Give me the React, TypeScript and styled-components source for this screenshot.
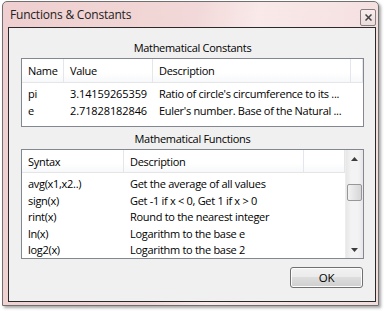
import React from "react";
import styled, { createGlobalStyle } from "styled-components";

const Global = createGlobalStyle`
  html, body { margin: 0; padding: 0; background: #ffffff; }
  body { font-family: "Open Sans", "Noto Sans", sans-serif; }
`;

const Page = styled.div`
  width: 384px;
  height: 311px;
  padding: 1px 0 0 2px;
  box-sizing: border-box;
`;

const Window = styled.div`
  width: 377px;
  height: 305px;
  box-sizing: border-box;
  border: 1px solid #707070;
  border-radius: 5px 5px 0 0;
  background: linear-gradient(100deg, #efcfcf 0%, #f2d8d8 45%, #f9e9e9 60%, #f3dcdc 100%);
  box-shadow: 2px 2px 3px rgba(0, 0, 0, 0.35);
  display: flex;
  flex-direction: column;
`;

const TitleBar = styled.div`
  height: 25px;
  display: flex;
  align-items: center;
  justify-content: space-between;
  padding: 0 2px 0 7px;
`;

const Title = styled.span`
  font-size: 12px;
  color: #222;
  letter-spacing: -0.2px;
`;

const CloseButton = styled.div`
  width: 14px;
  height: 15px;
  border: 1px solid #8a7f80;
  border-radius: 2px;
  background: linear-gradient(#f8eded, #ecdcdc);
  display: flex;
  align-items: center;
  justify-content: center;
  margin-top: 5px;
`;

const Client = styled.div`
  flex: 1;
  margin: 0 2px 3px 5px;
  border: 1px solid #2a2a2a;
  background: #f0f0f0;
  padding: 0 11px 0 12px;
  display: flex;
  flex-direction: column;
  font-size: 11px;
  letter-spacing: -0.3px;
  color: #000;
`;

const GroupLabel = styled.div<{ $top: number; $bottom: number }>`
  text-align: center;
  line-height: 15px;
  padding-top: ${(p) => p.$top}px;
  padding-bottom: ${(p) => p.$bottom}px;
`;

const ListView = styled.div<{ $h: number }>`
  height: ${(p) => p.$h}px;
  border: 1px solid #828790;
  background: #fff;
  box-sizing: border-box;
  display: flex;
  overflow: hidden;
`;

const ListBody = styled.div`
  flex: 1;
  min-width: 0;
  display: flex;
  flex-direction: column;
`;

const Header = styled.div<{ $cols: string }>`
  height: 23px;
  display: grid;
  grid-template-columns: ${(p) => p.$cols};
  border-bottom: 1px solid #e5e5e5;
  background: linear-gradient(#ffffff 0%, #ffffff 60%, #f7f8fa 100%);
  margin-bottom: 2px;
`;

const HeaderCell = styled.div`
  display: flex;
  align-items: center;
  padding-left: 6px;
  border-right: 1px solid #e3e6ea;
  white-space: nowrap;
  overflow: hidden;
`;

const Row = styled.div<{ $cols: string }>`
  height: 17px;
  display: grid;
  grid-template-columns: ${(p) => p.$cols};
  align-items: center;
`;

const Cell = styled.div<{ $mono?: boolean }>`
  padding-left: 6px;
  white-space: nowrap;
  overflow: hidden;
  letter-spacing: ${(p) => (p.$mono ? "-0.1px" : "inherit")};
`;

const ScrollBar = styled.div`
  width: 17px;
  display: flex;
  flex-direction: column;
  background: linear-gradient(90deg, #e7e7e7, #f3f3f3 30%, #f3f3f3 70%, #e7e7e7);
  border-left: 1px solid #ededed;
`;

const ScrollArrow = styled.div`
  height: 17px;
  display: flex;
  align-items: center;
  justify-content: center;
`;

const Track = styled.div`
  flex: 1;
  padding-top: 17px;
`;

const Thumb = styled.div`
  height: 15px;
  margin: 0 1px;
  border: 1px solid #979797;
  border-radius: 2px;
  background: linear-gradient(90deg, #f2f2f2, #e4e4e4 50%, #d6d6d6);
`;

const ButtonRow = styled.div`
  display: flex;
  justify-content: flex-end;
  padding-top: 8px;
  padding-right: 1px;
`;

const Button = styled.div`
  width: 73px;
  height: 21px;
  box-sizing: border-box;
  border: 1px solid #707070;
  border-radius: 3px;
  background: linear-gradient(#f2f2f2 0%, #ebebeb 45%, #dddddd 50%, #cfcfcf 100%);
  box-shadow: inset 0 0 0 1px #fcfcfc;
  display: flex;
  align-items: center;
  justify-content: center;
  font-size: 11.5px;
`;

const constCols = "42px 89px 198px 1fr";
const funcCols = "102px 180px 1fr";

const constants = [
  ["pi", "3.14159265359", "Ratio of circle's circumference to its ..."],
  ["e", "2.71828182846", "Euler's number. Base of the Natural ..."],
];

const functions = [
  ["avg(x1,x2..)", "Get the average of all values"],
  ["sign(x)", "Get -1 if x < 0, Get 1 if x > 0"],
  ["rint(x)", "Round to the nearest integer"],
  ["ln(x)", "Logarithm to the base e"],
  ["log2(x)", "Logarithm to the base 2"],
];

const Tri = ({ up }: { up?: boolean }) => (
  <svg width="7" height="4" viewBox="0 0 7 4">
    <path d={up ? "M0 4 L3.5 0 L7 4 Z" : "M0 0 L3.5 4 L7 0 Z"} fill="#3c3c3c" />
  </svg>
);

export default function App() {
  return (
    <Page>
      <Global />
      <Window>
        <TitleBar>
          <Title>Functions &amp; Constants</Title>
          <CloseButton>
            <svg width="7" height="7" viewBox="0 0 7 7">
              <path d="M0.5 0.5 L6.5 6.5 M6.5 0.5 L0.5 6.5" stroke="#444" strokeWidth="1.5" />
            </svg>
          </CloseButton>
        </TitleBar>
        <Client>
          <GroupLabel $top={12} $bottom={3}>Mathematical Constants</GroupLabel>
          <ListView $h={69}>
            <ListBody>
              <Header $cols={constCols}>
                <HeaderCell>Name</HeaderCell>
                <HeaderCell>Value</HeaderCell>
                <HeaderCell>Description</HeaderCell>
                <HeaderCell />
              </Header>
              {constants.map((c) => (
                <Row key={c[0]} $cols={constCols}>
                  <Cell>{c[0]}</Cell>
                  <Cell $mono>{c[1]}</Cell>
                  <Cell>{c[2]}</Cell>
                  <Cell />
                </Row>
              ))}
            </ListBody>
          </ListView>
          <GroupLabel $top={4} $bottom={3}>Mathematical Functions</GroupLabel>
          <ListView $h={110}>
            <ListBody>
              <Header $cols={funcCols}>
                <HeaderCell>Syntax</HeaderCell>
                <HeaderCell>Description</HeaderCell>
                <HeaderCell />
              </Header>
              {functions.map((f) => (
                <Row key={f[0]} $cols={funcCols}>
                  <Cell>{f[0]}</Cell>
                  <Cell>{f[1]}</Cell>
                  <Cell />
                </Row>
              ))}
            </ListBody>
            <ScrollBar>
              <ScrollArrow><Tri up /></ScrollArrow>
              <Track><Thumb /></Track>
              <ScrollArrow><Tri /></ScrollArrow>
            </ScrollBar>
          </ListView>
          <ButtonRow>
            <Button>OK</Button>
          </ButtonRow>
        </Client>
      </Window>
    </Page>
  );
}
